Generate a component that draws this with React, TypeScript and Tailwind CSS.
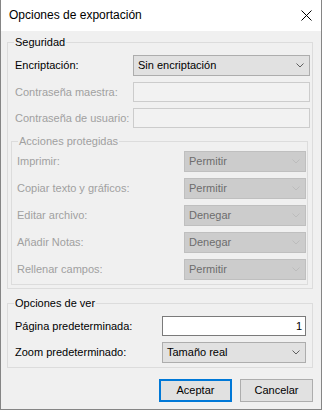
import React from "react";

const font = "font-['Liberation_Sans',Arial,sans-serif]";

function Chevron({ disabled }: { disabled?: boolean }) {
  return (
    <svg width="8" height="5" viewBox="0 0 8 5" className="shrink-0">
      <path d="M0.5 0.5 L4 4 L7.5 0.5" fill="none" stroke={disabled ? "#bcbcbc" : "#5f5f5f"} strokeWidth="1" />
    </svg>
  );
}

function Combo({ value, w, disabled }: { value: string; w: string; disabled?: boolean }) {
  return (
    <div
      className={`${w} h-[21px] flex items-center justify-between pl-[4px] pr-[5px] border ${
        disabled ? "bg-[#cccccc] border-[#bfbfbf] text-[#6d6d6d]" : "bg-[#e1e1e1] border-[#adadad] text-black"
      }`}
    >
      <span>{value}</span>
      <Chevron disabled={disabled} />
    </div>
  );
}

const protectedRows = [
  { label: "Imprimir:", value: "Permitir" },
  { label: "Copiar texto y gráficos:", value: "Permitir" },
  { label: "Editar archivo:", value: "Denegar" },
  { label: "Añadir Notas:", value: "Denegar" },
  { label: "Rellenar campos:", value: "Permitir" },
];

export default function App() {
  return (
    <div className={`w-[322px] h-[410px] flex flex-col bg-[#f0f0f0] border-x border-b border-[#858585] text-[11px] leading-[13px] text-black ${font}`}>
      {/* title bar */}
      <div className="h-[31px] shrink-0 bg-white flex items-center justify-between pl-[8px] pr-[9px]">
        <span className="text-[12px]">Opciones de exportación</span>
        <svg width="11" height="11" viewBox="0 0 11 11">
          <path d="M0.5 0.5 L10.5 10.5 M10.5 0.5 L0.5 10.5" stroke="#000" strokeWidth="1" />
        </svg>
      </div>

      <div className="flex flex-col pl-[6px]">
        {/* Seguridad */}
        <fieldset className="mt-[3px] w-[306px] border border-[#dcdcdc] pl-[3px] pr-[2px] pb-[3px]">
          <legend className="ml-[3px] px-[1px] leading-[16px]">Seguridad</legend>
          <div className="flex flex-col pt-[5px]">
            <div className="flex items-center justify-between pl-[4px]">
              <span>Encriptación:</span>
              <Combo value="Sin encriptación" w="w-[177px]" />
            </div>
            <div className="flex items-center justify-between pl-[4px] mt-[6px]">
              <span className="text-[#a0a0a0]">Contraseña maestra:</span>
              <div className="w-[177px] h-[20px] border border-[#cccccc] bg-[#f2f2f2]" />
            </div>
            <div className="flex items-center justify-between pl-[4px] mt-[6px]">
              <span className="text-[#a0a0a0]">Contraseña de usuario:</span>
              <div className="w-[177px] h-[20px] border border-[#cccccc] bg-[#f2f2f2]" />
            </div>

            <fieldset className="mt-[5px] w-[297px] border border-[#dcdcdc] pl-[2px] pr-[1px] pb-[4px]">
              <legend className="ml-[4px] px-[1px] leading-[16px] text-[#a0a0a0]">Acciones protegidas</legend>
              <div className="flex flex-col gap-[6px] pt-[2px]">
                {protectedRows.map((r) => (
                  <div key={r.label} className="flex items-center justify-between pl-[3px]">
                    <span className="text-[#a0a0a0]">{r.label}</span>
                    <Combo value={r.value} w="w-[122px]" disabled />
                  </div>
                ))}
              </div>
            </fieldset>
          </div>
        </fieldset>

        {/* Opciones de ver */}
        <fieldset className="mt-[6px] w-[306px] border border-[#dcdcdc] pl-[3px] pr-[6px] pb-[4px]">
          <legend className="ml-[3px] px-[1px] leading-[16px]">Opciones de ver</legend>
          <div className="flex flex-col gap-[6px] pt-[5px]">
            <div className="flex items-center justify-between pl-[4px]">
              <span>Página predeterminada:</span>
              <div className="w-[144px] h-[20px] border border-[#7a7a7a] bg-white flex items-center justify-end pr-[3px]">1</div>
            </div>
            <div className="flex items-center justify-between pl-[4px]">
              <span>Zoom predeterminado:</span>
              <Combo value="Tamaño real" w="w-[144px]" />
            </div>
          </div>
        </fieldset>

        {/* buttons */}
        <div className="flex justify-end gap-[8px] mt-[11px] pr-[8px]">
          <button className="w-[73px] h-[23px] bg-[#e1e1e1] border-2 border-[#0078d7] flex items-center justify-center">Aceptar</button>
          <button className="w-[73px] h-[23px] bg-[#e1e1e1] border border-[#adadad] flex items-center justify-center">Cancelar</button>
        </div>
      </div>
    </div>
  );
}
